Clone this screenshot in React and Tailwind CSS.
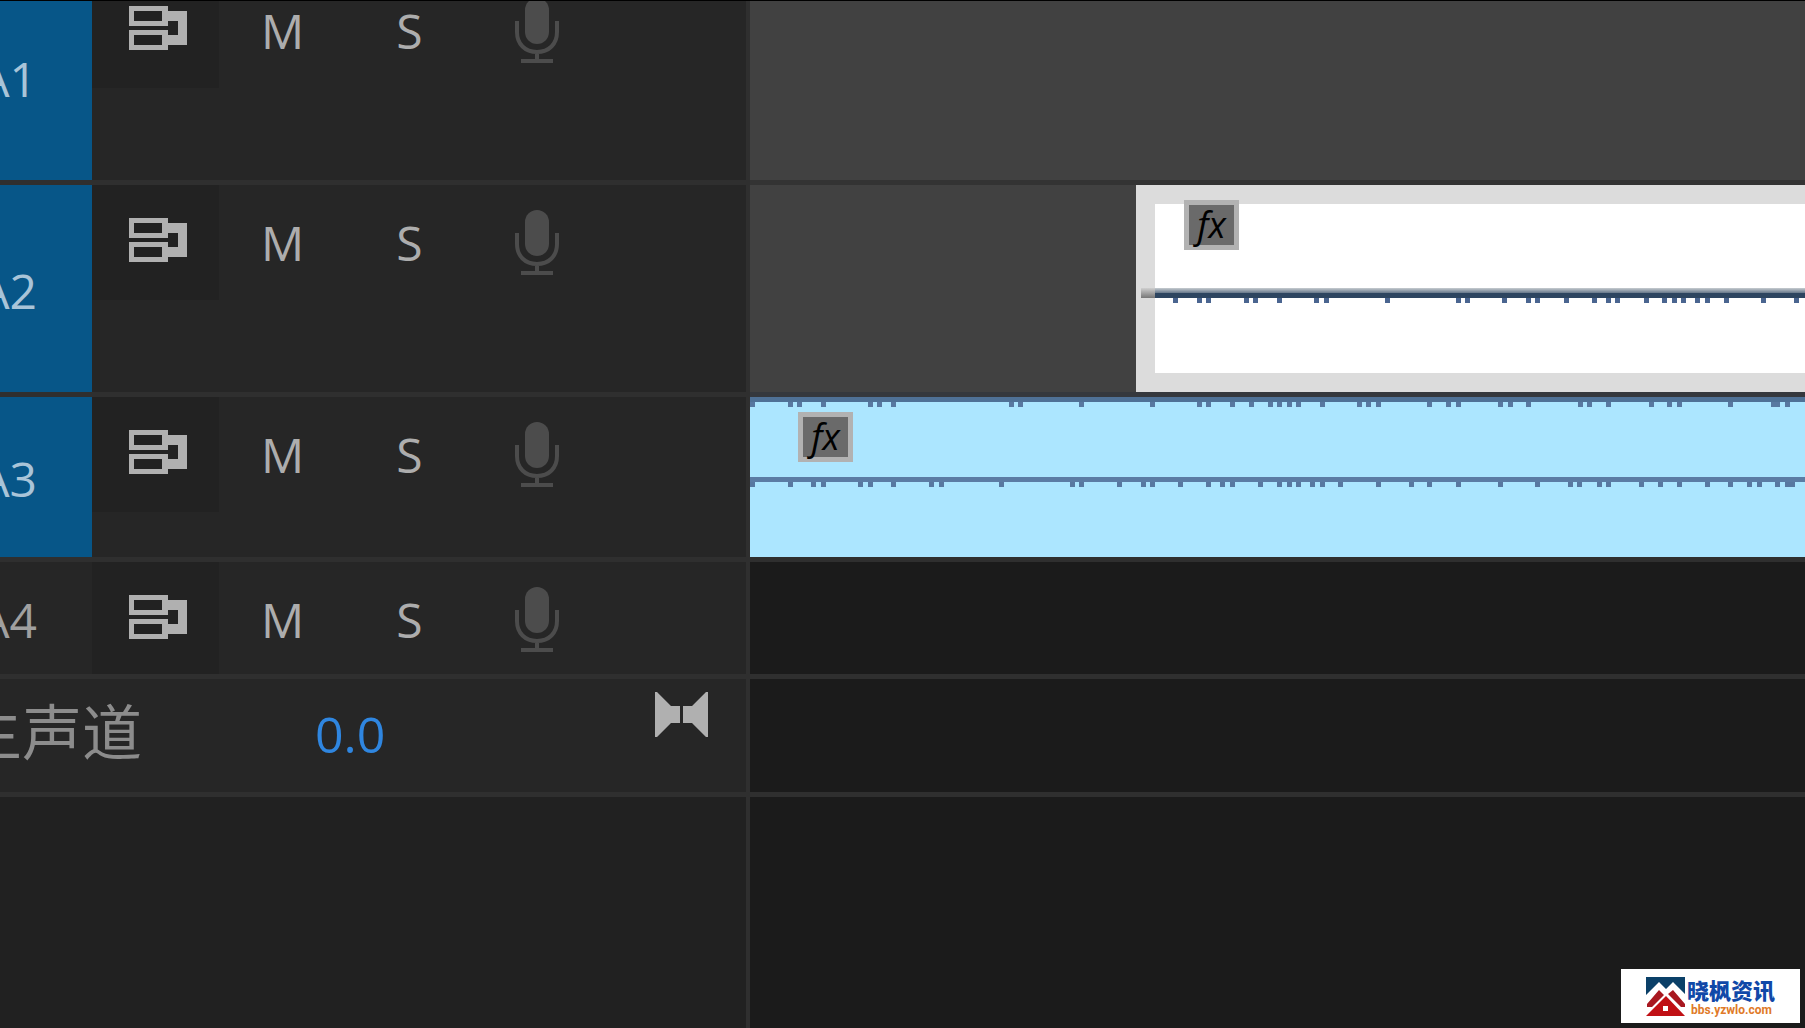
const tracks = [
  { id: "A1", targeted: true, height: "h-[179px]", scrolled: true },
  { id: "A2", targeted: true, height: "h-[207px]" },
  { id: "A3", targeted: true, height: "h-[160px]" },
  { id: "A4", targeted: false, height: "h-28" },
];

// x positions of the peaks, measured from the left edge of each clip
const narrationPeaks = [
  39, 63, 72, 110, 119, 143, 180, 190, 251, 322, 331, 368, 392, 401, 430, 458,
  472, 481, 510, 528, 538, 547, 561, 571, 590, 627, 660,
];

const musicLeftPeaks = [
  2, 40, 49, 73, 120, 129, 143, 261, 270, 331, 402, 449, 458, 482, 501, 520,
  529, 539, 548, 572, 609, 618, 628, 679, 698, 708, 750, 760, 778, 830, 839,
  858, 901, 919, 929, 980, 1023, 1027, 1037,
];

const musicRightPeaks = [
  2, 40, 63, 73, 110, 120, 143, 181, 191, 251, 322, 331, 369, 393, 402, 430,
  458, 472, 482, 510, 529, 539, 548, 562, 572, 590, 628, 661, 679, 708, 750,
  787, 820, 829, 849, 858, 891, 910, 929, 957, 980, 999, 1009, 1027, 1037,
  1042,
];

function SyncLockIcon() {
  return (
    <svg viewBox="0 0 58 44" className="h-11 w-[58px]" fill="#b0b0b0">
      <path
        fillRule="evenodd"
        d="M0 0h39v5h19v34H39v5H0V24h39v5h10V15H39v5H0zM5 5v10h28V5zM5 29v10h28V29z"
      />
    </svg>
  );
}

function MicIcon() {
  return (
    <svg viewBox="0 0 44 66" className="h-[66px] w-11">
      <rect x="10" y="0" width="24" height="46" rx="12" fill="#4c4c4c" />
      <path
        d="M2 23v11c0 12 8 20 20 20s20-8 20-20V23M22 54v8M6 63h32"
        fill="none"
        stroke="#4c4c4c"
        strokeWidth="4"
      />
    </svg>
  );
}

function BowTieIcon() {
  return (
    <svg viewBox="0 0 53 45" className="h-[45px] w-[53px]" fill="#b0b0b0">
      <path d="M0 0h2l14 14h9v17h-9L2 45H0zM53 0h-2L37 14h-9v17h9l14 14h2z" />
    </svg>
  );
}

function TrackHeader({ track }) {
  return (
    <div
      className={`box-content flex items-start overflow-hidden border-b-5 border-[#2f2f2f] leading-none text-[#adadad] ${track.height}`}
    >
      <button
        className={`flex h-full w-[92px] shrink-0 items-center justify-end pr-[55px] text-5xl leading-none ${
          track.scrolled ? "pb-6" : "pt-1"
        } ${
          track.targeted ? "bg-[#075688] text-[#a9c4d8]" : "text-[#a0a0a0]"
        }`}
      >
        {track.id}
      </button>
      <div
        className={`flex shrink-0 ${track.scrolled ? "h-[87px]" : "h-[115px]"}`}
      >
        <button
          aria-label="Sync lock"
          className="flex w-[127px] items-end bg-[#222222] pb-[38px] pl-[37px]"
        >
          <SyncLockIcon />
        </button>
        <button className="flex w-[127px] items-end justify-center pb-[33px] text-5xl leading-none font-medium">
          M
        </button>
        <button className="flex w-[127px] items-end justify-center pb-[33px] text-5xl leading-none font-medium">
          S
        </button>
        <button
          aria-label="Voice-over record"
          className="flex w-[127px] items-end justify-center pb-6"
        >
          <MicIcon />
        </button>
      </div>
    </div>
  );
}

function FxBadge() {
  return (
    <button className="absolute top-[15px] left-12 flex h-[50px] w-[55px] items-center justify-center border-5 border-[#b2b2b2] bg-[#6a6a6a] text-4xl leading-none font-medium text-black italic">
      fx
    </button>
  );
}

function Waveform({ peaks, color, line }) {
  return (
    <svg className="block h-[11px] w-full" fill={color}>
      <rect width="100%" height="5" fill={line} />
      {peaks.map((x) => (
        <rect key={x} x={x - 2} y="5" width="5" height="5" />
      ))}
    </svg>
  );
}

function NarrationClip() {
  return (
    <div className="relative ml-[386px] h-full">
      <div className="h-full border-y-19 border-l-19 border-[#dcdcdc] bg-white pt-[84px]">
        <div className="h-[5px] bg-linear-to-b from-[#c8cdd1] to-[#66778a]" />
        <Waveform
          peaks={narrationPeaks.map((x) => x - 19)}
          color="#4a6590"
          line="#2d4560"
        />
      </div>
      <div className="absolute top-[103px] left-[5px] h-[10px] w-[14px] bg-linear-to-b from-[#cfcfcf] to-[#777777]" />
      <FxBadge />
    </div>
  );
}

function MusicClip() {
  return (
    <div className="relative flex h-full flex-col bg-[#ace6ff]">
      <div className="flex-1">
        <Waveform peaks={musicLeftPeaks} color="#5878a0" line="#4f7196" />
      </div>
      <div className="flex-1">
        <Waveform peaks={musicRightPeaks} color="#5878a0" line="#5b7ca4" />
      </div>
      <FxBadge />
    </div>
  );
}

function Watermark() {
  return (
    <a
      href="#"
      className="absolute right-[5px] bottom-[5px] flex h-[54px] w-[179px] items-center gap-0.5 bg-white pl-[25px]"
    >
      <svg viewBox="0 0 39 39" className="h-[39px] w-[39px] shrink-0">
        <path d="M0 0h39v17L27 5l-7 7-7-7L0 18z" fill="#0b4068" />
        <path d="M1 27l12-14 5 5L6 30H1zM22 17l5-4 12 14v3h-4z" fill="#a81820" />
        <path d="M0 39l20-20 19 20z" fill="#c01015" />
        <path d="M17 29h5v5h-5z" fill="#fff" />
      </svg>
      <span className="flex flex-col pt-1">
        <span className="text-[22px] leading-6 font-black text-[#1048a8]">
          晓枫资讯
        </span>
        <span className="pl-1 font-['Roboto'] text-xs leading-4 font-bold text-[#e07a28]">
          bbs.yzwlo.com
        </span>
      </span>
    </a>
  );
}

export default function App() {
  return (
    <div className="relative flex min-h-screen overflow-hidden border-t border-black bg-[#1b1b1b] font-['Open_Sans','Noto_Sans_CJK_SC',sans-serif]">
      <aside className="flex w-[750px] shrink-0 flex-col border-r-4 border-[#2f2f2f] bg-[#262626]">
        {tracks.map((track) => (
          <TrackHeader key={track.id} track={track} />
        ))}
        <div className="box-content flex h-[113px] overflow-hidden border-b-5 border-[#2f2f2f]">
          <h2 className="flex w-[142px] shrink-0 items-center justify-end pb-2 text-6xl leading-none whitespace-nowrap text-[#8c8c8c]">
            主声道
          </h2>
          <label className="flex flex-1 items-center pb-1 pl-[173px]">
            <input
              aria-label="主声道"
              defaultValue="0.0"
              className="w-28 bg-transparent text-[50px] leading-none font-medium text-[#2f86e0] outline-none"
            />
          </label>
          <button
            aria-label="Master keyframes"
            className="flex items-start pt-[13px] pr-[38px]"
          >
            <BowTieIcon />
          </button>
        </div>
        <div className="flex-1 bg-[#212121]" />
      </aside>

      <main className="min-w-0 flex-1">
        <div className="box-content h-[179px] border-b-5 border-[#333333] bg-[#414141]" />
        <div className="box-content h-[207px] border-b-5 border-[#35383d] bg-[#414141]">
          <NarrationClip />
        </div>
        <div className="box-content h-[160px] border-b-5 border-[#2f2f2f]">
          <MusicClip />
        </div>
        <div className="box-content h-28 border-b-5 border-[#2f2f2f]" />
        <div className="box-content h-[113px] border-b-5 border-[#2f2f2f]" />
      </main>

      <Watermark />
    </div>
  );
}
